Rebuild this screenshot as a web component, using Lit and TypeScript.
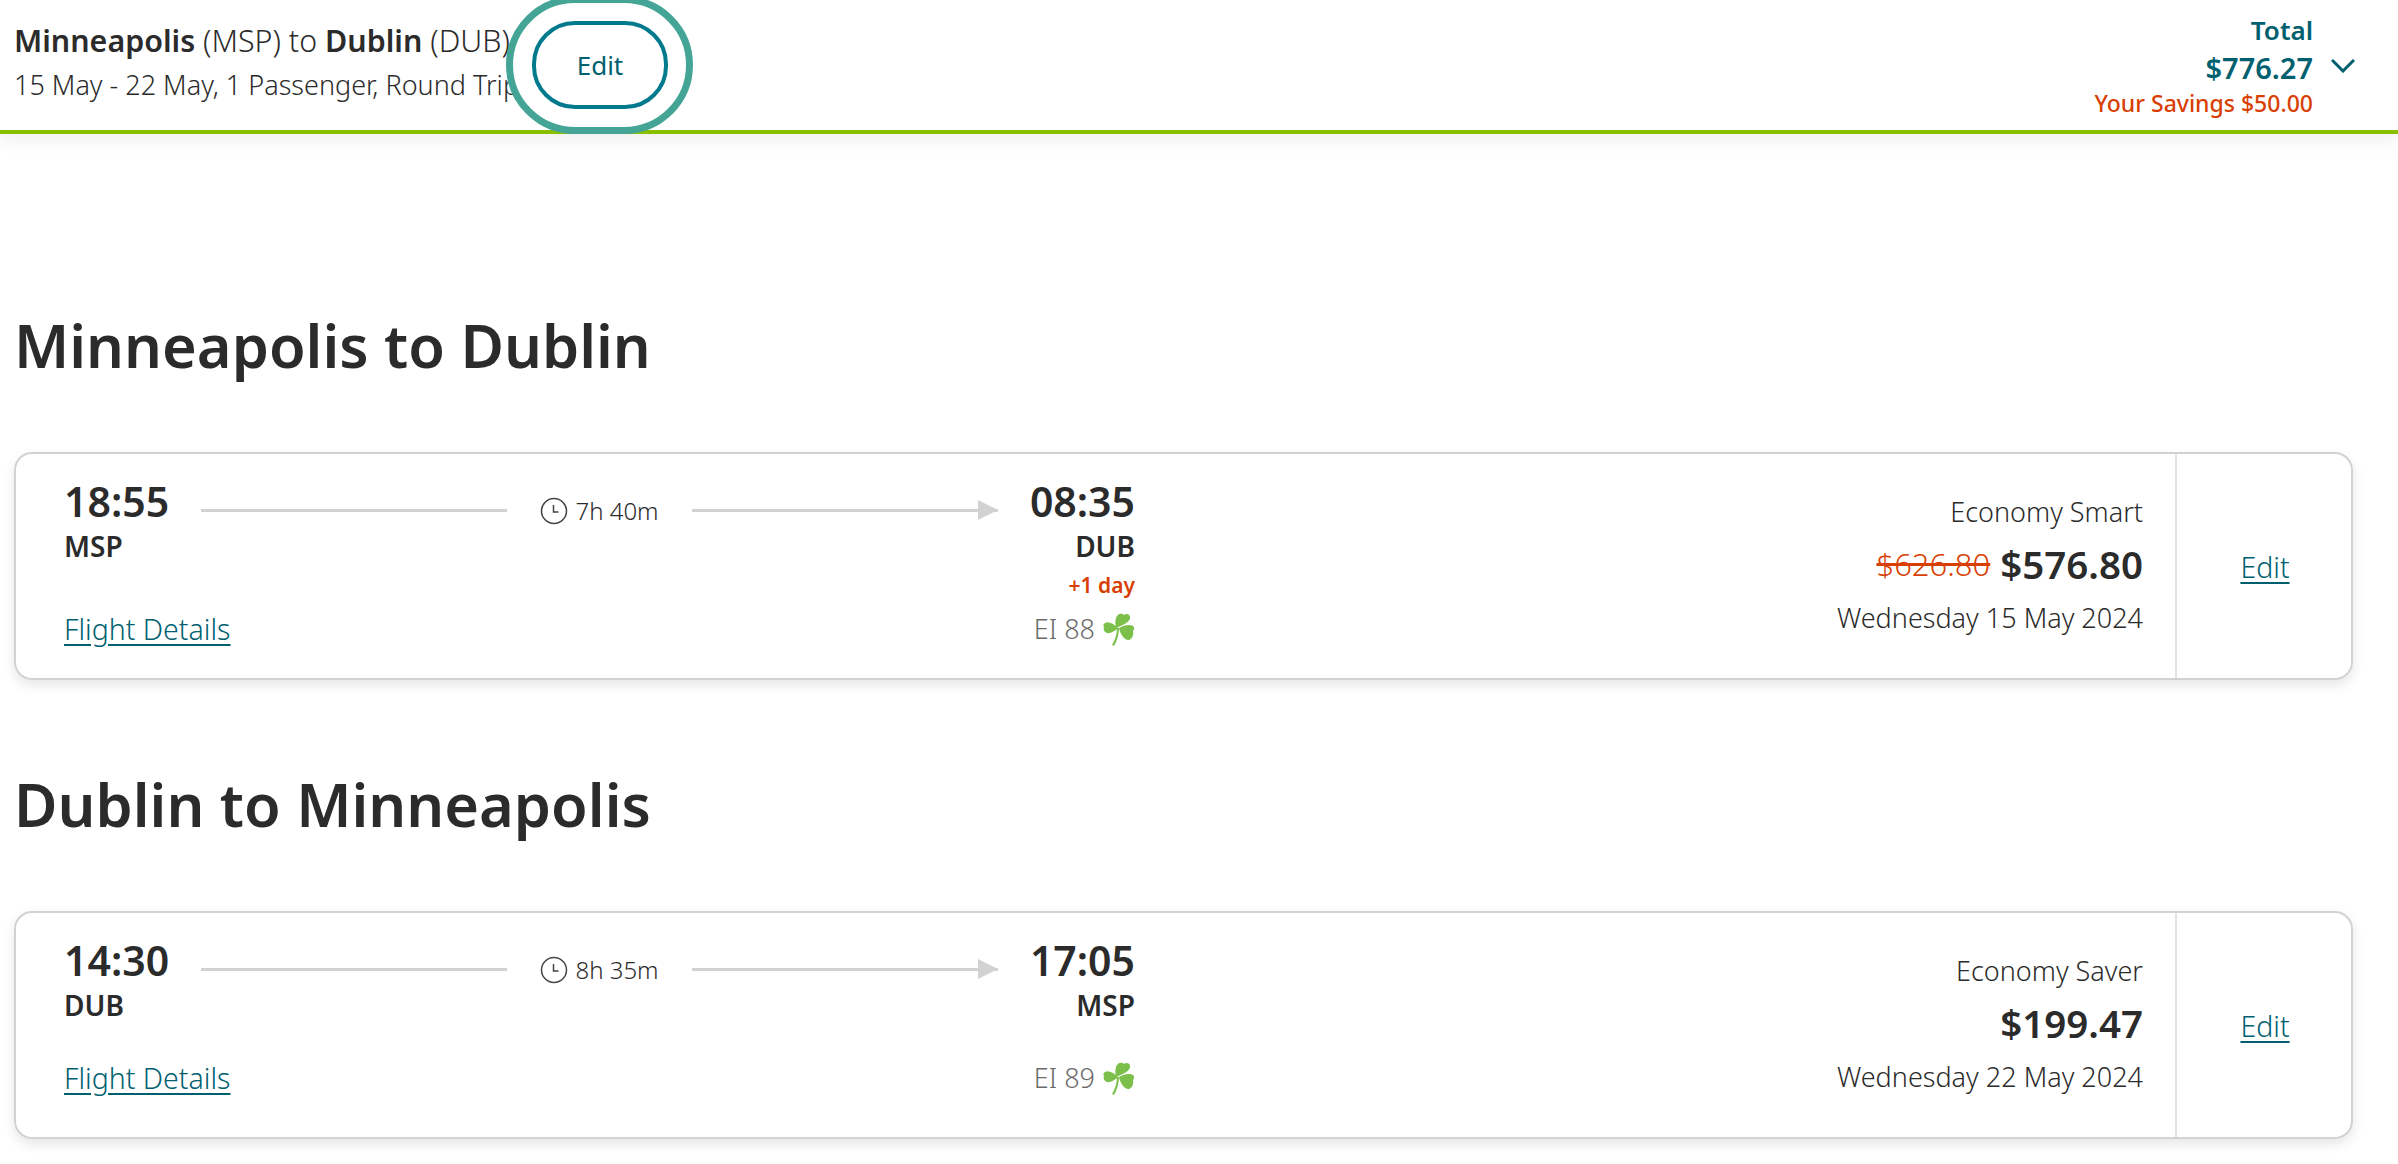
import {css, LitElement, html} from 'lit';
import {customElement} from 'lit/decorators.js';

interface Flight {
  heading: string;
  depart: string;
  from: string;
  arrive: string;
  to: string;
  duration: string;
  nextDay: boolean;
  flightNo: string;
  fareName: string;
  oldPrice?: string;
  price: string;
  date: string;
}

const FLIGHTS: Flight[] = [
  {
    heading: 'Minneapolis to Dublin',
    depart: '18:55',
    from: 'MSP',
    arrive: '08:35',
    to: 'DUB',
    duration: '7h 40m',
    nextDay: true,
    flightNo: 'EI 88',
    fareName: 'Economy Smart',
    oldPrice: '$626.80',
    price: '$576.80',
    date: 'Wednesday 15 May 2024',
  },
  {
    heading: 'Dublin to Minneapolis',
    depart: '14:30',
    from: 'DUB',
    arrive: '17:05',
    to: 'MSP',
    duration: '8h 35m',
    nextDay: false,
    flightNo: 'EI 89',
    fareName: 'Economy Saver',
    price: '$199.47',
    date: 'Wednesday 22 May 2024',
  },
];

@customElement('app-root')
export class AppRoot extends LitElement {
  static styles = css`
    :host {
      display: block;
      min-height: 1164px;
      background: #fff;
      color: #2b2b2b;
      font-family: "Noto Sans", "Open Sans", sans-serif;
      font-weight: 300;
      overflow: hidden;
    }
    .header {
      display: flex;
      align-items: center;
      box-sizing: border-box;
      height: 134px;
      padding: 0 85px 0 14px;
      border-bottom: 4px solid #88bf00;
      box-shadow: 0 4px 20px rgba(0, 0, 0, 0.08);
    }
    .trip {
      flex: 0 0 518px;
      padding-bottom: 6px;
      white-space: nowrap;
    }
    .trip-title {
      font-size: 30.400px;
      line-height: 40px;
      margin-bottom: 6px;
    }
    .trip-title b, .fare-price b {
      font-weight: 600;
    }
    .trip-sub {
      font-size: 27px;
      line-height: 36px;
    }
    .edit-wrap {
      position: relative;
      display: flex;
    }
    .edit-wrap::before {
      content: "";
      position: absolute;
      inset: -25px -25px -25px -26px;
      border: 7px solid #44a596;
      border-radius: 69px;
      background: #fff;
    }
    .edit-btn {
      position: relative;
      box-sizing: border-box;
      width: 136px;
      height: 88px;
      border: 4px solid #007a8c;
      border-radius: 43px;
      background: #fff;
      color: #00606f;
      font: inherit;
      font-size: 26px;
      font-weight: 400;
    }
    .total {
      margin-left: auto;
      display: flex;
      flex-direction: column;
      align-items: flex-end;
      color: #00606f;
      font-weight: 600;
      position: relative;
    }
    .total-label {
      font-size: 26px;
      line-height: 36px;
    }
    .total-amount {
      font-size: 29px;
      line-height: 40px;
    }
    .total-saving {
      font-size: 23px;
      line-height: 31px;
      color: #d83f04;
      font-weight: 500;
    }
    .chevron {
      position: absolute;
      left: calc(100% + 18px);
      top: 47px;
    }
    main {
      padding: 0 45px 0 14px;
    }
    h2 {
      margin: 88px 0 71px;
      font-size: 59.500px;
      line-height: 72px;
      font-weight: 600;
    }
    h2.first {
      margin-top: 175px;
    }
    .card {
      display: flex;
      box-sizing: border-box;
      height: 228px;
      border: 2px solid #d2d2d2;
      border-radius: 18px;
      box-shadow: 0 5px 12px rgba(0, 0, 0, 0.1);
    }
    .flight {
      flex: 0 0 1071px;
      margin-left: 48px;
      padding-top: 24px;
    }
    .times {
      display: flex;
      justify-content: space-between;
      gap: 32px;
    }
    .time {
      font-size: 41px;
      line-height: 46px;
      font-weight: 600;
    }
    .route {
      flex: 1;
      display: flex;
      align-items: center;
      gap: 33px;
      padding-top: 17px;
      height: 31px;
    }
    .line {
      flex: 1;
      height: 3px;
      background: #d2d2d2;
    }
    .line.arrow {
      position: relative;
    }
    .line.arrow::after {
      content: "";
      position: absolute;
      right: 0;
      top: -9px;
      border-left: 20px solid #d2d2d2;
      border-top: 10px solid transparent;
      border-bottom: 10px solid transparent;
    }
    .duration {
      display: flex;
      align-items: center;
      gap: 7px;
      font-size: 24px;
    }
    .codes {
      display: flex;
      justify-content: space-between;
      margin-top: 3px;
      font-size: 28px;
      line-height: 34px;
      font-weight: 600;
    }
    .next-day {
      margin-top: 9px;
      text-align: right;
      color: #d83f04;
      font-size: 21px;
      line-height: 26px;
      font-weight: 600;
    }
    .foot {
      display: flex;
      justify-content: space-between;
      align-items: center;
      margin-top: 38px;
      line-height: 34px;
    }
    .next-day + .foot {
      margin-top: 13px;
    }
    a {
      color: #00606f;
      font-size: 28.500px;
      text-decoration: underline;
      text-underline-offset: 4px;
    }
    .flight-no {
      display: flex;
      align-items: center;
      gap: 7px;
      color: #6b6b6b;
      font-size: 27px;
    }
    .shamrock {
      margin-top: 2px;
      filter: blur(0.4px);
    }
    .fare {
      flex: 1;
      display: flex;
      flex-direction: column;
      align-items: flex-end;
      padding: 41px 32px 0 0;
      font-size: 27px;
      line-height: 34px;
      white-space: nowrap;
    }
    .fare-price {
      display: flex;
      align-items: center;
      gap: 10px;
      margin: 9px 0 11px;
      line-height: 52px;
    }
    .fare-price s {
      color: #d83f04;
      font-size: 31px;
    }
    .fare-price b {
      font-size: 38.500px;
    }
    .change {
      flex: 0 0 176px;
      display: flex;
      align-items: center;
      justify-content: center;
      box-sizing: border-box;
      padding: 2px 0 0 2px;
      border-left: 2px solid #e2e2e2;
    }
  `;

  renderClock() {
    return html`<svg width="28" height="28" viewBox="0 0 28 28" fill="none" stroke="#444" stroke-width="1.5">
      <circle cx="14" cy="14" r="12.5"></circle>
      <path d="M13.5 8v7h5"></path>
    </svg>`;
  }

  renderShamrock() {
    return html`<svg class="shamrock" width="33" height="34" viewBox="7 8 33 34" fill="#7cc04b">
      <path d="M21 23C20 18 20 12 23 10C25 8 28 9 29 10C31 8 35 9 35 12C36 16 29 20 21 23Z"></path>
      <path d="M23 23C18 18 13 16 10 18C8 19 8 21 9 22C8 24 9 27 12 28C15 29 20 26 23 23Z"></path>
      <path d="M24 23C29 20 35 19 38 21C40 23 39 25 38 26C39 30 37 34 34 35C30 36 25 29 24 23Z"></path>
      <path d="M22 23C22 29 20 35 17 40L19 41C22 36 24 29 24 23Z"></path>
    </svg>`;
  }

  renderFlight(f: Flight, index: number) {
    return html`
      <h2 class=${index === 0 ? 'first' : ''}>${f.heading}</h2>
      <section class="card">
        <div class="flight">
          <div class="times">
            <span class="time">${f.depart}</span>
            <div class="route">
              <div class="line"></div>
              <div class="duration">${this.renderClock()}<span>${f.duration}</span></div>
              <div class="line arrow"></div>
            </div>
            <span class="time">${f.arrive}</span>
          </div>
          <div class="codes"><span>${f.from}</span><span>${f.to}</span></div>
          ${f.nextDay ? html`<div class="next-day">+1 day</div>` : ''}
          <div class="foot">
            <a href="#">Flight Details</a>
            <span class="flight-no">${f.flightNo} ${this.renderShamrock()}</span>
          </div>
        </div>
        <div class="fare">
          <span>${f.fareName}</span>
          <div class="fare-price">
            ${f.oldPrice ? html`<s>${f.oldPrice}</s>` : ''}
            <b>${f.price}</b>
          </div>
          <span>${f.date}</span>
        </div>
        <div class="change"><a href="#">Edit</a></div>
      </section>
    `;
  }

  render() {
    return html`
      <header class="header">
        <div class="trip">
          <div class="trip-title"><b>Minneapolis</b> (MSP) to <b>Dublin</b> (DUB)</div>
          <div class="trip-sub">15 May - 22 May, 1 Passenger, Round Trip</div>
        </div>
        <div class="edit-wrap"><button class="edit-btn">Edit</button></div>
        <div class="total">
          <span class="total-label">Total</span>
          <span class="total-amount">$776.27</span>
          <span class="total-saving">Your Savings $50.00</span>
          <svg class="chevron" width="24" height="14" viewBox="0 0 24 14" fill="none" stroke="#00606f" stroke-width="3">
            <path d="M1 1l11 11L23 1"></path>
          </svg>
        </div>
      </header>
      <main>${FLIGHTS.map((f, i) => this.renderFlight(f, i))}</main>
    `;
  }
}
